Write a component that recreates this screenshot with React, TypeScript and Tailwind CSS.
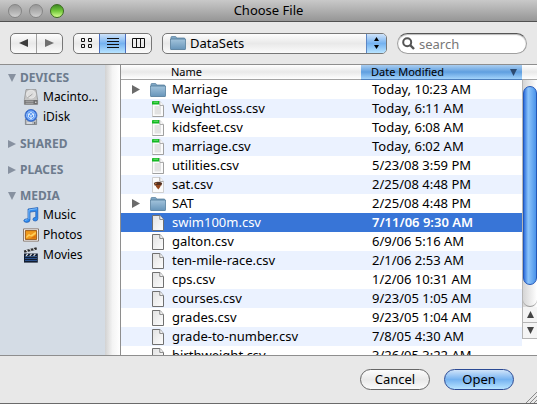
import { useState } from "react";
import type { ReactNode } from "react";

type FileKind = "folder" | "sheet" | "plain" | "acorn";
type FileEntry = { name: string; date: string; kind: FileKind };

const files: FileEntry[] = [
  { name: "Marriage", date: "Today, 10:23 AM", kind: "folder" },
  { name: "WeightLoss.csv", date: "Today, 6:11 AM", kind: "sheet" },
  { name: "kidsfeet.csv", date: "Today, 6:08 AM", kind: "sheet" },
  { name: "marriage.csv", date: "Today, 6:02 AM", kind: "sheet" },
  { name: "utilities.csv", date: "5/23/08 3:59 PM", kind: "sheet" },
  { name: "sat.csv", date: "2/25/08 4:48 PM", kind: "acorn" },
  { name: "SAT", date: "2/25/08 4:48 PM", kind: "folder" },
  { name: "swim100m.csv", date: "7/11/06 9:30 AM", kind: "plain" },
  { name: "galton.csv", date: "6/9/06 5:16 AM", kind: "plain" },
  { name: "ten-mile-race.csv", date: "2/1/06 2:53 AM", kind: "plain" },
  { name: "cps.csv", date: "1/2/06 10:31 AM", kind: "plain" },
  { name: "courses.csv", date: "9/23/05 1:05 AM", kind: "plain" },
  { name: "grades.csv", date: "9/23/05 1:04 AM", kind: "plain" },
  { name: "grade-to-number.csv", date: "7/8/05 4:30 AM", kind: "plain" },
  { name: "birthweight.csv", date: "3/26/05 3:22 AM", kind: "plain" },
];

function Triangle({ dir, className }: { dir: "left" | "right" | "down" | "up"; className: string }) {
  const points = {
    left: "8,0 8,8 0,4",
    right: "0,0 8,4 0,8",
    down: "0,0 8,0 4,8",
    up: "0,8 8,8 4,0",
  }[dir];
  return (
    <svg viewBox="0 0 8 8" preserveAspectRatio="none" className={className} fill="currentColor" aria-hidden="true">
      <polygon points={points} />
    </svg>
  );
}

function FolderIcon() {
  return (
    <svg viewBox="0 0 16 14" className="h-3.5 w-4 shrink-0" aria-hidden="true">
      <defs>
        <linearGradient id="folder" x1="0" y1="0" x2="0" y2="1">
          <stop offset="0" stopColor="#a3c4dc" />
          <stop offset="1" stopColor="#6795ba" />
        </linearGradient>
      </defs>
      <path d="M1 3V1.3Q1 .5 2 .5H5.5Q6.3 .5 6.5 2H14.5V4H1z" fill="#7fa6c4" stroke="#5f86a4" strokeWidth=".8" />
      <path d="M.4 3H15.6V12.8Q15.6 13.5 15 13.5H1Q.4 13.5 .4 12.8z" fill="url(#folder)" stroke="#4f7898" strokeWidth=".8" />
    </svg>
  );
}

function DocIcon({ kind }: { kind: FileKind }) {
  const plain = kind === "plain";
  return (
    <svg viewBox="0 0 12 16" className="mx-0.5 h-4 w-3 shrink-0" aria-hidden="true">
      <defs>
        <linearGradient id="paper" x1="0" y1="0" x2="1" y2="1">
          <stop offset="0" stopColor="#e2e2e2" />
          <stop offset="1" stopColor="#fdfdfd" />
        </linearGradient>
      </defs>
      <path d="M.5 .5H8L11.5 4.5V15.5H.5z" fill={plain ? "url(#paper)" : "#fbfbfb"} stroke={plain ? "#707070" : "#cfcfcf"} />
      {kind === "sheet" && (
        <>
          <path d="M2.5 5H9V13.5H2.5z" fill="#e2e2e2" />
          <path d="M11.5 4.5V15.5H.5" fill="none" stroke="#a0a0a0" />
          <path d="M0 .8Q0 0 1 0H7.4V3.6H0z" fill="#14b923" />
          <path d="M1.5 1.2H6" stroke="#7be87f" strokeWidth=".9" />
        </>
      )}
      {kind === "acorn" && (
        <>
          <path d="M1.8 6Q6 3.6 10.2 6L9.4 8.4H2.6z" fill="#55301f" />
          <path d="M3.4 8H8.8Q8.5 10.8 6.3 12.4Q4 10.8 3.4 8z" fill="#96481e" />
          <path d="M2.8 7L4.6 6.2" stroke="#d28a52" />
        </>
      )}
      <path d="M7.8 .5V4.4H11.5" fill="#fff" stroke={plain ? "#777" : "#9a9a9a"} strokeWidth=".9" />
    </svg>
  );
}

function DiskIcon({ blue = false }: { blue?: boolean }) {
  return (
    <svg viewBox="0 0 16 16" className="size-4" aria-hidden="true">
      {blue ? (
        <>
          <path d="M2.4 10H13.6V15.5H2.4z" fill="#b9bcc0" stroke="#75797e" strokeWidth=".8" />
          <path d="M4 14H9" stroke="#f4f4f4" />
          <circle cx="11.8" cy="14" r=".7" fill="#333" />
          <circle cx="8" cy="6.4" r="6" fill="#2b66d8" stroke="#3f6fc0" strokeWidth=".8" />
          <circle cx="8" cy="6.4" r="4.4" fill="#4b8df0" stroke="#a9d0ff" strokeWidth=".9" />
          <path d="M5.4 5L8 3.4L10.6 5V8L8 9.6L5.4 8zM5.4 5L8 6.5L10.6 5M8 6.5V9.6" fill="none" stroke="#eaf5ff" strokeWidth=".9" />
        </>
      ) : (
        <>
          <path d="M3 .6H13L14.6 10.5V15.4H1.4V10.5z" fill="#c6c6c6" stroke="#8b8b8b" strokeWidth=".7" />
          <ellipse cx="8" cy="5.2" rx="4.4" ry="4" fill="#dedede" stroke="#efefef" strokeWidth=".7" />
          <path d="M4.5 8.8L9.5 5" stroke="#a6a6a6" />
          <path d="M1.4 11H14.6V15.4H1.4z" fill="#6e6e6e" />
          <path d="M2.5 12.2H10.5M2.5 14.2H10.5" stroke="#c9c9c9" strokeWidth=".8" />
          <circle cx="12.8" cy="13.2" r=".7" fill="#eee" />
        </>
      )}
    </svg>
  );
}

function MusicIcon() {
  return (
    <svg viewBox="0 0 16 16" className="size-4" aria-hidden="true">
      <path
        d="M5 2L14.8 .6V11.6Q14.8 14 12.3 14Q9.9 14 9.9 12.3Q9.9 10.5 12.8 10.3V4.3L7 5.1V12.8Q7 15.4 3.6 15.4Q.8 15.4 .8 13.6Q.8 11.8 5 11.7z"
        fill="#2f8cf0"
        stroke="#1c56ac"
        strokeWidth=".7"
      />
      <path d="M5.9 2.9L14 1.7M5.9 3V12M2 13.5Q3 12.6 4.5 12.8" stroke="#a5d4ff" strokeWidth=".7" fill="none" />
    </svg>
  );
}

function PhotosIcon() {
  return (
    <svg viewBox="0 0 16 14" className="h-3.5 w-4" aria-hidden="true">
      <path d="M.5 .9H15.5V13.1H.5z" fill="#fff" stroke="#8a7b70" />
      <path d="M2.3 2.6H13.7V11.4H2.3z" fill="#f09a1c" stroke="#8f4c0b" strokeWidth=".9" />
      <path d="M3.3 8.5L6 5.8L7.5 7.2L12.8 3.8V5.8L9 8.6L6 8L3.5 10.2z" fill="#ffce5a" />
      <path d="M7 10.4L12.8 7V10.6z" fill="#d8700c" />
    </svg>
  );
}

function MoviesIcon() {
  return (
    <svg viewBox="0 0 16 16" className="size-4" aria-hidden="true">
      <path d="M1 6.5H14.8V15.6H1z" fill="#121d30" />
      <path d="M.8 3.4L13.4 .3L14 2.4L1.4 5.7z" fill="#2b2b2b" />
      <path d="M3.2 3L4.8 4.6M6.6 2.1L8.2 3.7M10 1.3L11.6 2.9M3 8.8L4.8 6.8M6.8 8.8L8.6 6.8M10.6 8.8L12.4 6.8" stroke="#e6e6e6" strokeWidth="1.2" />
      <path d="M2 9.6H14" stroke="#4c79b5" strokeWidth=".7" />
      <path d="M2 11.5H14M2 13.5H14" stroke="#29508c" strokeWidth="1" />
    </svg>
  );
}

const silver = "bg-linear-to-b from-[#fdfdfd] from-0% via-[#e9e9e9] via-50% to-[#fbfbfb]";
const aqua = "bg-linear-to-b from-[#cfe3f9] from-0% via-[#75b2f0] via-50% to-[#b8e4ff]";

function TrafficLight({ label, green = false }: { label: string; green?: boolean }) {
  return (
    <button
      type="button"
      aria-label={label}
      className={
        green
          ? "size-3.5 rounded-full border border-[#3b6b1f] bg-linear-to-b from-[#3f8a22] via-[#72c93a] to-[#d4ff8f]"
          : "size-3.5 rounded-full border border-[#858585] bg-linear-to-b from-[#989898] via-[#b0b0b0] to-[#d0d0d0]"
      }
    />
  );
}

function SidebarGroup({ title, children }: { title: string; children?: ReactNode }) {
  return (
    <section>
      <h2>
        <button type="button" className="flex h-[18px] items-center gap-1 text-[12px] font-bold text-[#6d7b8d]">
          <Triangle dir={children ? "down" : "right"} className="size-2 text-[#8791a0]" />
          {title}
        </button>
      </h2>
      {children && <ul>{children}</ul>}
    </section>
  );
}

function SidebarItem({ icon, label }: { icon: ReactNode; label: string }) {
  return (
    <li>
      <a href="#" className="flex h-5 items-center gap-1 pl-[15px] text-[12px] text-black">
        <span className="flex w-4 justify-center">{icon}</span>
        {label}
      </a>
    </li>
  );
}

export default function App() {
  const [selected, setSelected] = useState("swim100m.csv");
  const [view, setView] = useState("list");

  const views = [
    {
      id: "icons",
      icon: (
        <svg viewBox="0 0 12 10" className="h-2.5 w-3" fill="none" stroke="#111" aria-hidden="true">
          <path d="M.5 .5H3.5V3.5H.5zM7.5 .5H10.5V3.5H7.5zM.5 6.5H3.5V9.5H.5zM7.5 6.5H10.5V9.5H7.5z" />
        </svg>
      ),
    },
    {
      id: "list",
      icon: (
        <svg viewBox="0 0 12 10" className="h-2.5 w-3" stroke="#111" aria-hidden="true">
          <path d="M0 .5H12M0 3.5H12M0 6.5H12M0 9.5H12" />
        </svg>
      ),
    },
    {
      id: "columns",
      icon: (
        <svg viewBox="0 0 13 10" className="h-2.5 w-[13px]" fill="none" stroke="#111" aria-hidden="true">
          <path d="M.5 .5H12.5V9.5H.5zM4.5 .5V9.5M8.5 .5V9.5" />
        </svg>
      ),
    },
  ];

  return (
    <main className="flex h-screen flex-col overflow-hidden border-b border-[#6a6a6a] bg-[#e8e8e8] font-['Noto_Sans',sans-serif] text-[13px] text-black">
      <header className="grid h-[22px] shrink-0 grid-cols-[1fr_auto_1fr] items-center border-b border-[#515151] bg-linear-to-b from-[#c9c9c9] to-[#969696] px-2">
        <div className="flex gap-[7px]">
          <TrafficLight label="Close" />
          <TrafficLight label="Minimize" />
          <TrafficLight label="Zoom" green />
        </div>
        <h1 className="text-[13px]">Choose File</h1>
      </header>

      <div className="flex h-[43px] shrink-0 items-center gap-2.5 border-b border-[#8e8e8e] px-2.5">
        <div className={`flex h-[21px] w-[53px] overflow-hidden rounded-[5px] border border-[#777] ${silver}`}>
          <button type="button" aria-label="Back" className="flex flex-1 items-center justify-center border-r border-[#a0a0a0]">
            <Triangle dir="left" className="h-2 w-[9px] text-[#3c3c3c]" />
          </button>
          <button type="button" aria-label="Forward" className="flex flex-1 items-center justify-center">
            <Triangle dir="right" className="h-2 w-[9px] text-[#6f6f6f]" />
          </button>
        </div>
        <div className={`flex h-[21px] w-[79px] overflow-hidden rounded-[5px] border border-[#777] ${silver}`}>
          {views.map((v) => (
            <button
              key={v.id}
              type="button"
              aria-label={v.id}
              aria-pressed={view === v.id}
              onClick={() => setView(v.id)}
              className={`flex flex-1 items-center justify-center ${view === v.id ? `border-x border-[#4a6fc0] ${aqua}` : ""}`}
            >
              {v.icon}
            </button>
          ))}
        </div>
        <div className={`relative flex h-[21px] min-w-0 flex-1 overflow-hidden rounded-[5px] border border-[#777] ${silver}`}>
          <select aria-label="Folder" className="w-full appearance-none pl-[27px] text-[13px] outline-none">
            <option>DataSets</option>
          </select>
          <span className="pointer-events-none absolute inset-y-0 left-[7px] flex items-center">
            <FolderIcon />
          </span>
          <span className={`pointer-events-none absolute inset-y-0 right-0 flex w-5 flex-col items-center justify-center gap-1 border-l border-[#5c86c4] ${aqua}`}>
            <Triangle dir="up" className="h-1 w-[5px] text-black" />
            <Triangle dir="down" className="h-1 w-[5px] text-black" />
          </span>
        </div>
        <label className="flex h-[21px] w-[130px] items-center gap-1 rounded-full border border-[#a0a0a0] border-t-[#555] bg-white pl-1 shadow-[inset_0_1px_1px_#bbb]">
          <svg viewBox="0 0 13 13" className="size-[13px] shrink-0" fill="none" stroke="#555" strokeWidth="2" aria-hidden="true">
            <circle cx="5.2" cy="5.2" r="4" />
            <path d="M8.2 8.2L12 12" strokeWidth="2.4" />
          </svg>
          <input aria-label="Search" placeholder="search" className="h-full w-full min-w-0 pt-0.5 text-[13px] outline-none placeholder:text-[#777]" />
        </label>
      </div>

      <div className="flex min-h-0 flex-1">
        <nav aria-label="Places" className="flex w-[105px] shrink-0 flex-col gap-2 bg-[#d4dce5] pt-1 pl-2">
          <SidebarGroup title="DEVICES">
            <SidebarItem icon={<DiskIcon />} label="Macinto…" />
            <SidebarItem icon={<DiskIcon blue />} label="iDisk" />
          </SidebarGroup>
          <SidebarGroup title="SHARED" />
          <SidebarGroup title="PLACES" />
          <SidebarGroup title="MEDIA">
            <SidebarItem icon={<MusicIcon />} label="Music" />
            <SidebarItem icon={<PhotosIcon />} label="Photos" />
            <SidebarItem icon={<MoviesIcon />} label="Movies" />
          </SidebarGroup>
        </nav>
        <div className="w-4 shrink-0 border-r border-[#8e8e8e] bg-linear-to-r from-[#d2d2d2] via-[#f4f4f4] to-white" />

        <div className="min-w-0 flex-1 overflow-hidden bg-white">
          <table className="w-full table-fixed border-separate border-spacing-0">
            <colgroup>
              <col />
              <col className="w-[161px]" />
            </colgroup>
            <thead>
              <tr className="h-[15px] text-left text-[11px] leading-[14px]">
                <th className="border-b border-[#a4a4a4] bg-linear-to-b from-white via-[#e9e9e9] to-white p-0 pl-[50px] font-normal">
                  Name
                </th>
                <th aria-sort="descending" className="border-b border-[#4d7fbc] bg-linear-to-b from-[#a9cdf0] via-[#5f9fe0] to-[#a3d3fb] p-0 font-normal">
                  <button type="button" className="flex h-3.5 w-full items-center justify-between pr-[5px] pl-2.5">
                    Date Modified
                    <Triangle dir="down" className="size-[7px] text-[#2c4a70]" />
                  </button>
                </th>
              </tr>
            </thead>
            <tbody>
              {files.map((f) => {
                const on = f.name === selected;
                return (
                  <tr
                    key={f.name}
                    aria-selected={on}
                    onClick={() => setSelected(f.name)}
                    className={`h-[19px] leading-[19px] ${on ? "bg-[#3875d7] text-white" : "odd:bg-white even:bg-[#ebf2ff]"}`}
                  >
                    <td className="p-0">
                      <div className="flex h-[19px] items-center pl-[11px]">
                        <span className="flex w-[18px]">
                          {f.kind === "folder" && (
                            <button type="button" aria-label={`Expand ${f.name}`}>
                              <Triangle dir="right" className="h-[9px] w-2 text-[#6b6b6b]" />
                            </button>
                          )}
                        </span>
                        {f.kind === "folder" ? <FolderIcon /> : <DocIcon kind={f.kind} />}
                        <span className="pl-1.5">{f.name}</span>
                      </div>
                    </td>
                    <td className={`p-0 pl-[11px] whitespace-nowrap ${on ? "font-semibold" : ""}`}>{f.date}</td>
                  </tr>
                );
              })}
            </tbody>
          </table>
        </div>

        <div className="flex w-[15px] shrink-0 flex-col bg-white">
          <div className="h-[15px] shrink-0 border-b border-[#a4a4a4] bg-linear-to-b from-white via-[#e9e9e9] to-white" />
          <div className="flex min-h-0 flex-1 flex-col border-l border-[#b5b5b5] bg-linear-to-r from-[#d5d5d5] to-white pt-1.5">
            <div className="min-h-0 flex-1 rounded-full border border-[#2458b8] bg-linear-to-r from-[#2f6fdc] from-0% via-[#8cc4fa] via-35% to-[#4a93ea]" />
            <div className="h-[22px] shrink-0 rounded-b-full border-b border-[#9a9a9a]" />
          </div>
          <button type="button" aria-label="Scroll up" className="flex h-4 shrink-0 items-center justify-center border-b border-l border-[#b5b5b5] bg-[#f4f4f4]">
            <Triangle dir="up" className="size-[7px] text-[#444]" />
          </button>
          <button type="button" aria-label="Scroll down" className="flex h-4 shrink-0 items-center justify-center border-b border-l border-[#b5b5b5] bg-[#f4f4f4]">
            <Triangle dir="down" className="size-[7px] text-[#444]" />
          </button>
          <div className="h-4 shrink-0" />
        </div>
      </div>

      <footer className="relative flex h-12 shrink-0 items-center justify-end gap-3.5 border-t border-[#8e8e8e] pr-[23px]">
        <button type="button" className={`h-[21px] w-[70px] rounded-full border border-[#666] text-[13px] leading-[19px] ${silver}`}>
          Cancel
        </button>
        <button type="button" className={`h-[21px] w-[70px] rounded-full border border-[#2b4a94] text-[13px] leading-[19px] ${aqua}`}>
          Open
        </button>
        <svg viewBox="0 0 12 12" className="absolute right-0 bottom-0 size-3" stroke="#8a8a8a" aria-hidden="true">
          <path d="M1 12L12 1M5 12L12 5M9 12L12 9" />
        </svg>
      </footer>
    </main>
  );
}
